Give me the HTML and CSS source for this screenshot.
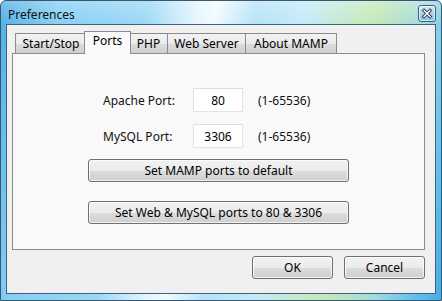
FILE: index.html
```html
<!DOCTYPE html>
<html lang="en">
<head>
    <meta charset="utf-8">
    <title>Preferences</title>
    <link rel="stylesheet" href="styles.css">
</head>
<body>
    <div class="window">
        <div class="titlebar">
            <span class="title">Preferences</span>
            <button class="close" aria-label="Close">
                <svg width="18" height="17" viewBox="0 0 18 17">
                    <defs>
                        <linearGradient id="cg" x1="0" y1="0" x2="0" y2="1">
                            <stop offset="0" stop-color="#d8eefa"/>
                            <stop offset="0.5" stop-color="#a9d3ee"/>
                            <stop offset="1" stop-color="#8cc1e6"/>
                        </linearGradient>
                    </defs>
                    <rect x="0.5" y="0.5" width="17" height="16" rx="2.5" fill="url(#cg)" stroke="#3e5c7c"/>
                    <rect x="1.5" y="1.5" width="15" height="14" rx="1.5" fill="none" stroke="#ffffff" stroke-opacity="0.6"/>
                    <path d="M6 5.5 L12 11.5 M12 5.5 L6 11.5" stroke="#2f3f52" stroke-width="3.2" stroke-linecap="square"/>
                    <path d="M6 5.5 L12 11.5 M12 5.5 L6 11.5" stroke="#ffffff" stroke-width="1.4" stroke-linecap="square"/>
                </svg>
            </button>
        </div>
        <div class="client">
            <div class="tabs">
                <div class="tab tab-start">Start/Stop</div>
                <div class="tab tab-ports active">Ports</div>
                <div class="tab tab-php">PHP</div>
                <div class="tab tab-web">Web Server</div>
                <div class="tab tab-about">About MAMP</div>
            </div>
            <div class="panel">
                <div class="fields">
                    <label class="field-label">Apache Port:</label>
                    <input class="port-input" type="text" value="80">
                    <span class="range">(1-65536)</span>

                    <label class="field-label">MySQL Port:</label>
                    <input class="port-input" type="text" value="3306">
                    <span class="range">(1-65536)</span>
                </div>
                <button class="btn btn-wide">Set MAMP ports to default</button>
                <button class="btn btn-wide btn-second">Set Web &amp; MySQL ports to 80 &amp; 3306</button>
            </div>
            <div class="actions">
                <button class="btn btn-action">OK</button>
                <button class="btn btn-action">Cancel</button>
            </div>
        </div>
    </div>
</body>
</html>
```

FILE: styles.css
```css
body {
    margin: 0;
    font-family: "Noto Sans", "Noto Sans CJK TC", sans-serif;
    font-size: 12px;
    color: #000;
}
.window {
    box-sizing: border-box;
    width: 442px;
    height: 301px;
    border: 1px solid #3a5772;
    border-radius: 6px 6px 0 0;
    padding: 0 5px 6px 5px;
    display: flex;
    flex-direction: column;
    background:
        linear-gradient(180deg, rgba(255, 255, 255, 0.25) 0, rgba(255, 255, 255, 0) 24px),
        linear-gradient(100deg, #4fb0e6 0%, #86cff3 12%, #9ad8f6 30%, #e4f5fd 40%, #f2fbff 44%, #b4e3f8 52%, #c3eaf9 62%, #c6e9b4 76%, #a6dcdc 86%, #66c2ee 94%, #45ade6 100%);
}
.titlebar {
    height: 23px;
    display: flex;
    justify-content: space-between;
    align-items: flex-start;
}
.title {
    margin: 5px 0 0 2px;
    font-size: 12px;
    color: #111;
}
.close {
    margin-top: 4px;
    padding: 0;
    border: none;
    background: none;
    width: 18px;
    height: 17px;
    display: block;
}
.close svg {
    display: block;
}
.client {
    flex: 1;
    background-color: #f0f0f0;
    border: 1px solid #43607a;
    padding: 6px 10px 0 5px;
}
.tabs {
    display: flex;
    align-items: flex-end;
    padding-left: 3px;
    height: 23px;
    margin-bottom: -1px;
    position: relative;
    z-index: 1;
}
.tab {
    box-sizing: border-box;
    flex: none;
    height: 21px;
    padding-top: 2px;
    border: 1px solid #898c95;
    margin-left: -1px;
    background: linear-gradient(180deg, #f2f2f2 0%, #ebebeb 50%, #dddddd 51%, #cfcfcf 100%);
    color: #000;
    line-height: 16px;
    text-align: center;
}
.tab-start {
    width: 72px;
    margin-left: 0;
}
.tab-ports {
    width: 47px;
}
.tab-php {
    width: 39px;
}
.tab-web {
    width: 79px;
}
.tab-about {
    width: 92px;
}
.tab.active {
    height: 23px;
    margin: 0 -2px 0 -3px;
    padding-top: 1px;
    border-bottom: none;
    background: #f9f9f9;
    position: relative;
    z-index: 2;
}
.tab.active + .tab {
    margin-left: 0;
}
.panel {
    box-sizing: border-box;
    height: 197px;
    border: 1px solid #898c95;
    background-color: #f9f9f9;
    padding: 34px 0 0 75px;
}
.fields {
    display: grid;
    grid-template-columns: 75px 50px auto;
    column-gap: 15px;
    row-gap: 12px;
    align-items: center;
    margin-left: 15px;
}
.field-label {
    color: #111;
}
.port-input {
    box-sizing: border-box;
    width: 50px;
    height: 24px;
    border: 1px solid #e3e3e3;
    border-top-color: #dcdcdc;
    background: #fff;
    font: inherit;
    text-align: center;
    padding: 0;
    color: #000;
}
.range {
    color: #111;
}
.btn {
    box-sizing: border-box;
    border: 1px solid #707070;
    border-radius: 3px;
    background: linear-gradient(180deg, #f2f2f2 0%, #ebebeb 50%, #dddddd 51%, #cfcfcf 100%);
    box-shadow: inset 0 0 0 1px rgba(255, 255, 255, 0.7);
    font: inherit;
    color: #000;
    padding: 0;
    height: 23px;
    display: block;
}
.btn-wide {
    width: 261px;
    margin-top: 11px;
}
.btn-second {
    margin-top: 19px;
}
.actions {
    display: flex;
    justify-content: flex-end;
    gap: 11px;
    margin-top: 6px;
}
.btn-action {
    width: 81px;
}
```
